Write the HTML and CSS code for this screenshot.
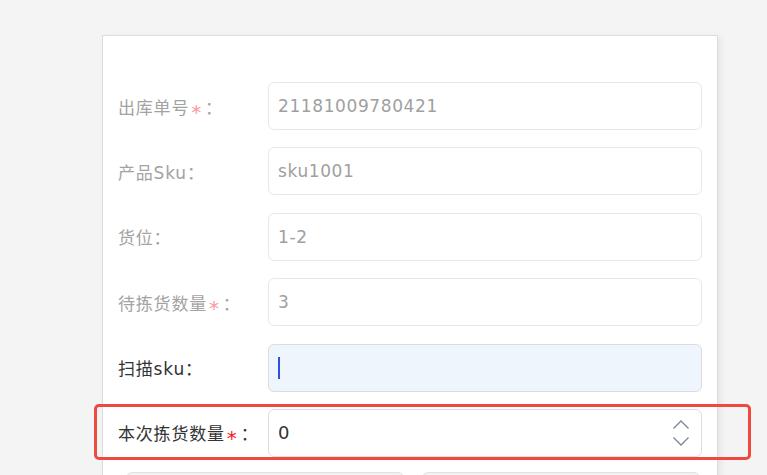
FILE: index.html
```html
<!DOCTYPE html>
<html lang="zh">
<head>
<meta charset="utf-8">
<link rel="stylesheet" href="styles.css">
</head>
<body>
<div class="page">
  <div class="card">
    <div class="form">
      <div class="row disabled">
        <label class="label">出库单号<span class="req">*</span>：</label>
        <div class="field">21181009780421</div>
      </div>
      <div class="row disabled">
        <label class="label">产品Sku：</label>
        <div class="field">sku1001</div>
      </div>
      <div class="row disabled">
        <label class="label">货位：</label>
        <div class="field">1-2</div>
      </div>
      <div class="row disabled">
        <label class="label">待拣货数量<span class="req">*</span>：</label>
        <div class="field">3</div>
      </div>
      <div class="row">
        <label class="label">扫描sku：</label>
        <div class="field scan"><span class="caret"></span></div>
      </div>
      <div class="row">
        <label class="label">本次拣货数量<span class="req">*</span>：</label>
        <div class="field number">
          <span class="value">0</span>
          <span class="spin">
            <svg width="18" height="28" viewBox="0 0 18 28" fill="none" stroke="#7d8694" stroke-width="1.3">
              <path d="M1.5 9.5 L9 2 L16.5 9.5"/>
              <path d="M1.5 18.5 L9 26 L16.5 18.5"/>
            </svg>
          </span>
        </div>
      </div>
    </div>
    <div class="actions">
      <button class="btn" aria-label="取消"></button>
      <button class="btn" aria-label="确定"></button>
    </div>
  </div>
  <div class="highlight"></div>
</div>
</body>
</html>
```

FILE: styles.css
```css
html, body {
  margin: 0;
  padding: 0;
  background: #f4f4f4;
  overflow: hidden;
}
body {
  font-family: "DejaVu Sans", "Noto Sans CJK SC", sans-serif;
  font-size: 16px;
  height: 475px;
}
.page {
  position: relative;
  padding-top: 35px;
  padding-left: 102px;
}
.card {
  width: 616px;
  box-sizing: border-box;
  background: #fff;
  border: 1px solid #dcdcdc;
  box-shadow: 3px 2px 6px rgba(0, 0, 0, 0.06);
  padding: 46px 15px 40px 15px;
}
.form {
  display: flex;
  flex-direction: column;
  gap: 17.4px;
}
.row {
  display: grid;
  grid-template-columns: 150px 1fr;
  align-items: center;
  height: 48px;
}
.label {
  color: #333;
  font-size: 17px;
  letter-spacing: 0.8px;
  white-space: nowrap;
}
.row.disabled .label {
  color: #a3a3a3;
}
.req {
  color: #f21b1b;
  font-size: 20px;
  position: relative;
  top: 5px;
  margin-left: 2px;
  margin-right: 3px;
  line-height: 1;
}
.row.disabled .req {
  color: #f59a9a;
}
.field {
  height: 48px;
  box-sizing: border-box;
  border: 1px solid #e8e8e8;
  border-radius: 6px;
  padding: 0 9px;
  display: flex;
  align-items: center;
  color: #333;
  font-size: 17px;
  letter-spacing: 0.6px;
  background: #fff;
}
.row.disabled .field {
  color: #a0a0a0;
}
.field.scan {
  background: #eef5fd;
  border-color: #dcdcdc;
}
.caret {
  display: block;
  width: 1.5px;
  height: 22px;
  background: #3050e0;
}
.field.number {
  border-color: #dedede;
  justify-content: space-between;
  padding-right: 11px;
}
.value {
  font-size: 18px;
}
.spin {
  display: flex;
}
.actions {
  display: flex;
  gap: 18px;
  margin-top: 15px;
  padding: 0 2px 0 8px;
}
.btn {
  flex: 1;
  height: 56px;
  border: 1px solid #e2e2e2;
  border-radius: 6px;
  background: #f2f2f2;
}
.highlight {
  position: absolute;
  left: 94px;
  top: 404px;
  width: 657px;
  height: 56px;
  box-sizing: border-box;
  border: 3px solid #ee4a3f;
  border-radius: 5px;
}
```
